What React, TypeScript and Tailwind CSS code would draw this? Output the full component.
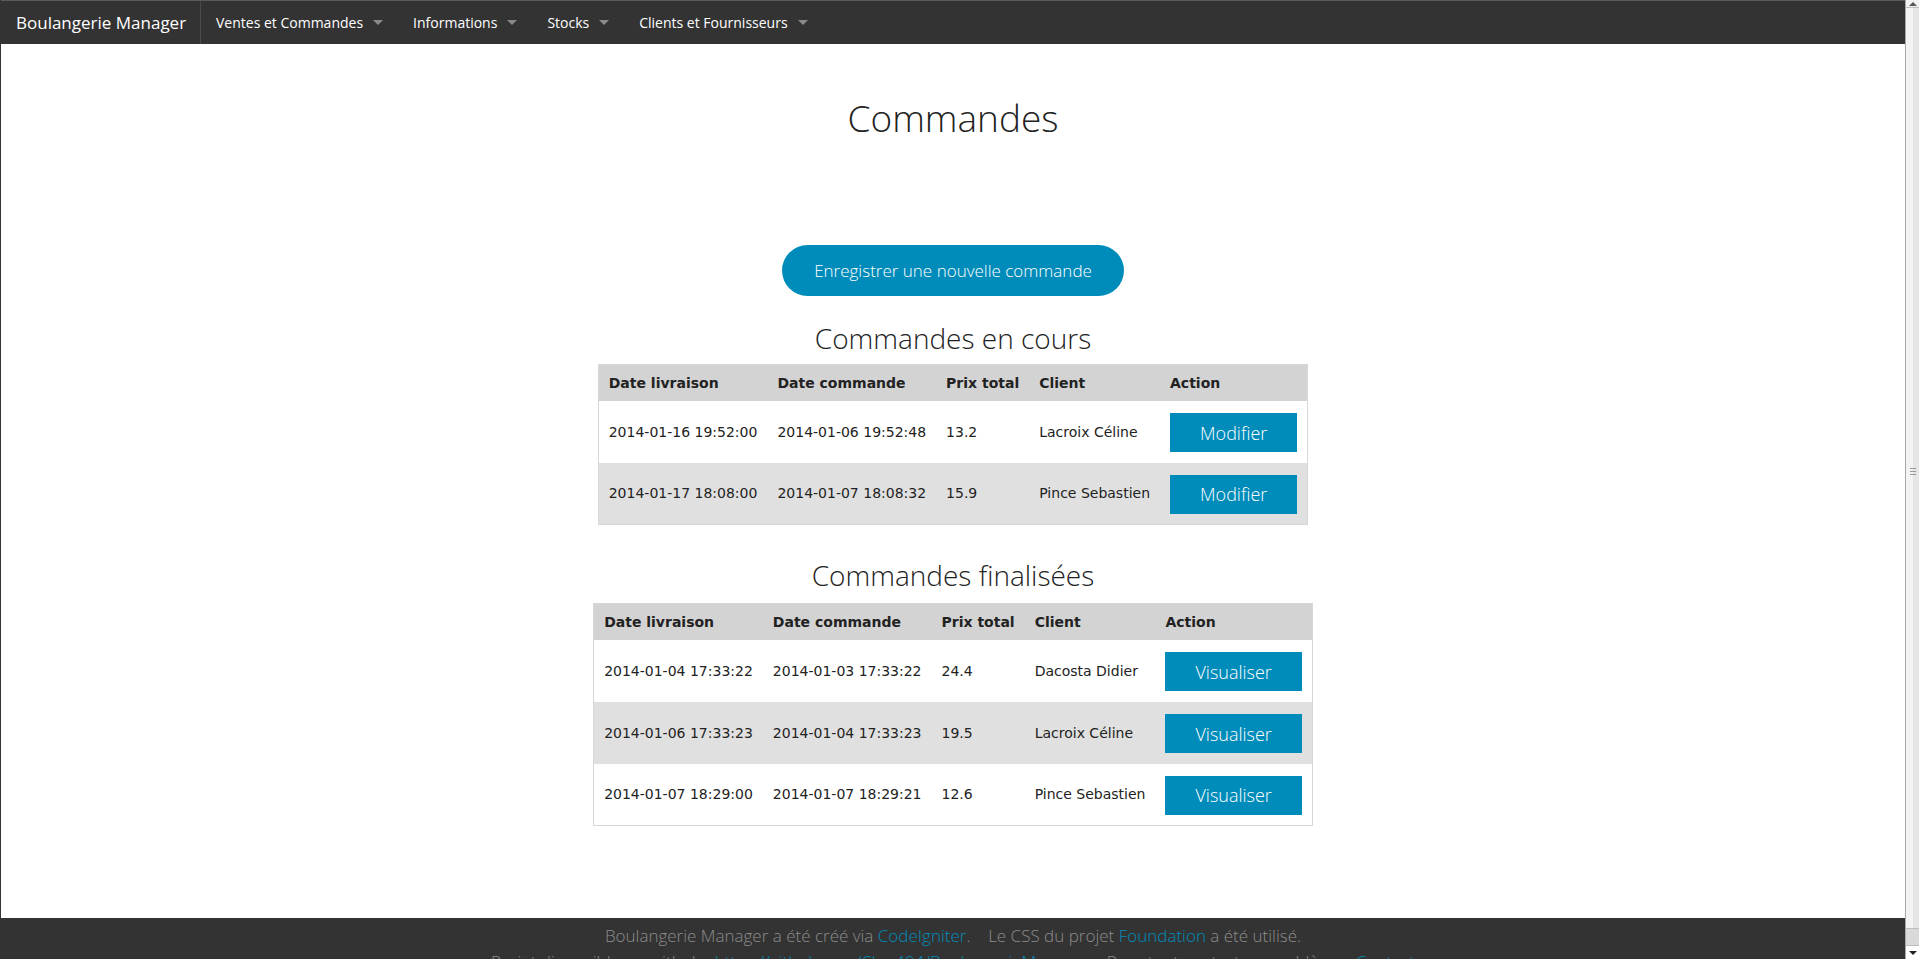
import React from "react";

const navItems = ["Ventes et Commandes", "Informations", "Stocks", "Clients et Fournisseurs"];

const enCours = [
  ["2014-01-16 19:52:00", "2014-01-06 19:52:48", "13.2", "Lacroix Céline"],
  ["2014-01-17 18:08:00", "2014-01-07 18:08:32", "15.9", "Pince Sebastien"],
];

const finalisees = [
  ["2014-01-04 17:33:22", "2014-01-03 17:33:22", "24.4", "Dacosta Didier"],
  ["2014-01-06 17:33:23", "2014-01-04 17:33:23", "19.5", "Lacroix Céline"],
  ["2014-01-07 18:29:00", "2014-01-07 18:29:21", "12.6", "Pince Sebastien"],
];

function OrdersTable({ rows, action }: { rows: string[][]; action: string }) {
  return (
    <table className="border border-[#d8d8d8] border-collapse text-[#222] text-[14px] leading-[18px] font-['DejaVu_Sans',sans-serif]">
      <thead>
        <tr className="bg-[#d3d3d3] h-[36px] text-left">
          <th className="px-[10px] font-bold">Date livraison</th>
          <th className="px-[10px] font-bold">Date commande</th>
          <th className="px-[10px] font-bold">Prix total</th>
          <th className="px-[10px] font-bold">Client</th>
          <th className="px-[10px] font-bold">Action</th>
        </tr>
      </thead>
      <tbody>
        {rows.map((r, i) => (
          <tr key={i} className={`h-[62px] ${i % 2 === 1 ? "bg-[#e0e0e0]" : "bg-white"}`}>
            {r.map((c, j) => (
              <td key={j} className="px-[10px] whitespace-nowrap">
                {c}
              </td>
            ))}
            <td className="px-[10px]">
              <button className="bg-[#008cba] text-white h-[39px] px-[30px] text-[18px] font-light font-['Open_Sans',sans-serif] mt-[2px]">
                {action}
              </button>
            </td>
          </tr>
        ))}
      </tbody>
    </table>
  );
}

// fake browser scrollbar, drawn to match the screenshot
function ScrollStrip() {
  return (
    <div className="w-[14px] shrink-0 h-full flex flex-col border-l border-[#a8a8a8] bg-[#f1f1f1]">
      <div className="h-[7px] flex items-start justify-center pt-[2px]">
        <span className="border-x-[4px] border-x-transparent border-b-[4px] border-b-[#555]" />
      </div>
      <div className="flex-1 flex border-y border-[#bdbdbd]">
        <div className="flex-1 bg-[#f3f3f3]" />
        <div className="flex-1 bg-[#e6e6e6] relative">
          <div className="absolute top-1/2 -left-[3px] w-[6px] flex flex-col gap-[2px]">
            <span className="h-px bg-[#999]" />
            <span className="h-px bg-[#999]" />
            <span className="h-px bg-[#999]" />
          </div>
        </div>
      </div>
      <div className="h-[16px] bg-[#d9d9d9]" />
      <div className="h-[14px] flex items-center justify-center bg-white border-t border-[#bdbdbd]">
        <span className="border-x-[4px] border-x-transparent border-t-[4px] border-t-[#222]" />
      </div>
    </div>
  );
}

export default function App() {
  return (
    <div className="h-screen flex bg-white font-['Open_Sans',sans-serif]">
      <div className="flex-1 overflow-hidden flex flex-col border-l border-[#333]">
        <nav className="h-[44px] shrink-0 bg-[#333] flex items-stretch border-t border-[#5a5a5a]">
          <div className="w-[200px] border-r border-[#4a4a4a] flex items-center pl-[15px] text-white text-[17px]">
            Boulangerie Manager
          </div>
          {navItems.map((n) => (
            <div key={n} className="relative flex items-center pl-[15px] pr-[35px] text-white text-[14px]">
              {n}
              <span className="absolute right-[15px] top-[19px] border-x-[5px] border-x-transparent border-t-[5px] border-t-[#8a8a8a]" />
            </div>
          ))}
        </nav>

        <main className="flex flex-col items-center text-[#222] shrink-0">
          <h1 className="mt-[51px] text-[37px] leading-[46px] font-light">Commandes</h1>
          <button className="mt-[104px] h-[51px] px-[32px] rounded-full bg-[#008cba] text-white text-[17px] font-light">
            Enregistrer une nouvelle commande
          </button>
          <h3 className="mt-[25px] text-[28px] leading-[35px] font-light">Commandes en cours</h3>
          <div className="mt-[8px]">
            <OrdersTable rows={enCours} action="Modifier" />
          </div>
          <h3 className="mt-[33px] text-[28px] leading-[35px] font-light">Commandes finalisées</h3>
          <div className="mt-[10px]">
            <OrdersTable rows={finalisees} action="Visualiser" />
          </div>
        </main>

        <footer className="mt-[92px] shrink-0 bg-[#333] text-[#8c8c8c] text-[17px] font-light leading-[26px] text-center pt-[5px] pb-[20px]">
          <p>
            Boulangerie Manager a été créé via <a className="text-[#008cba]">CodeIgniter</a>.&nbsp;&nbsp;&nbsp; Le CSS du
            projet <a className="text-[#008cba]">Foundation</a> a été utilisé.
          </p>
          <p>
            Projet disponible sur github : <a className="text-[#008cba]">https://github.com/Clen404/BoulangerieManager</a>
            &nbsp;&nbsp;&nbsp; Pour tout contact ou problème : <a className="text-[#008cba]">Contact</a>
          </p>
        </footer>
      </div>
      <ScrollStrip />
    </div>
  );
}
